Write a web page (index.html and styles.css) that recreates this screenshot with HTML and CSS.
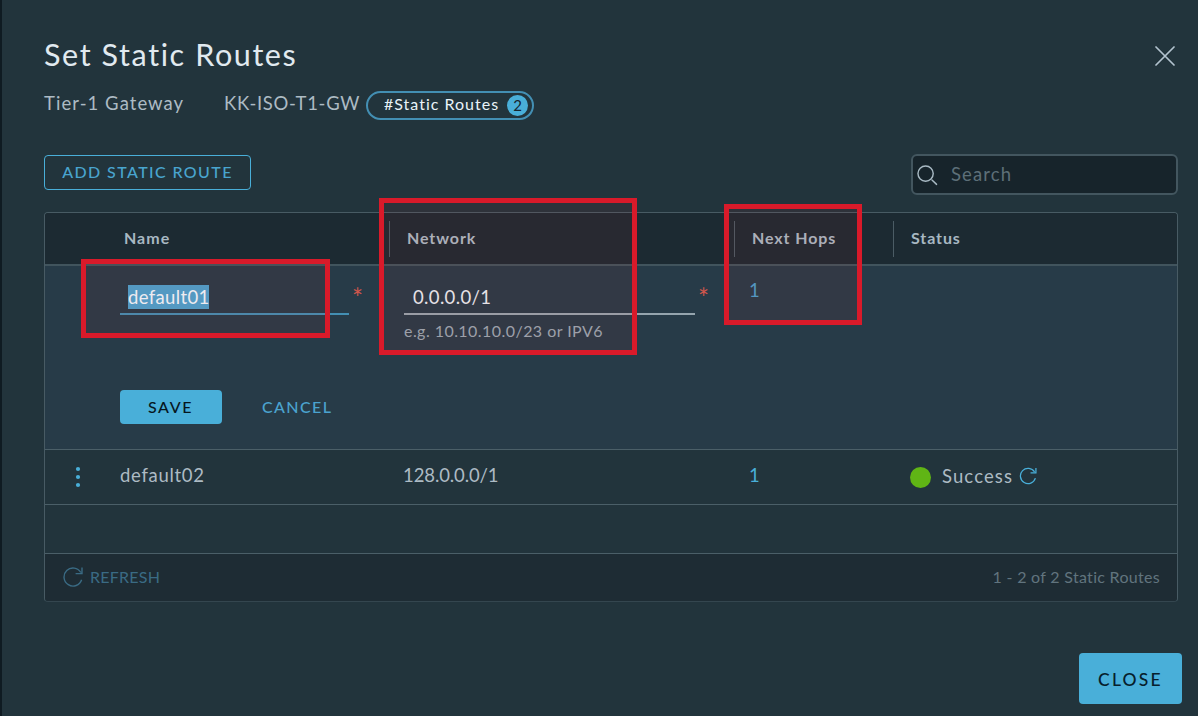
FILE: index.html
```html
<!DOCTYPE html>
<html lang="en">
<head>
<meta charset="utf-8">
<title>Set Static Routes</title>
<link rel="stylesheet" href="styles.css">
</head>
<body>
<main class="modal">
  <header class="modal-header">
    <h1 class="title"><span>Set Static Routes</span></h1>
    <svg class="close-icon" viewBox="0 0 20 20"><path d="M1 1L19 19M19 1L1 19"/></svg>
  </header>
  <div class="context">
    <span class="context-label"><span class="t-tier">Tier-1 Gateway</span></span>
    <span class="context-value"><span class="t-gw">KK-ISO-T1-GW</span></span>
    <span class="pill"><span class="t-pill">#Static Routes</span><span class="pill-count">2</span></span>
  </div>
  <div class="toolbar">
    <button class="btn-outline"><span class="t-add">ADD STATIC ROUTE</span></button>
    <div class="search">
      <svg class="search-icon" viewBox="0 0 22 22"><circle cx="9" cy="9" r="8"/><path d="M15.7 15.7L20.5 20.3"/></svg>
      <span class="t-search">Search</span>
    </div>
  </div>
  <section class="table">
    <div class="row head">
      <div class="cell head-name"><span class="t-name">Name</span></div>
      <div class="cell divided"><span class="t-network">Network</span></div>
      <div class="cell divided"><span class="t-hops">Next Hops</span></div>
      <div class="cell divided"><span class="t-status">Status</span></div>
    </div>
    <div class="edit">
      <div class="row edit-fields">
        <div class="field-cell name-cell">
          <div class="field field-name"><span class="selection">default01</span></div>
          <span class="required">*</span>
        </div>
        <div class="field-cell network-cell">
          <div class="field-stack">
            <div class="field field-network"><span class="t-net1">0.0.0.0/1</span></div>
            <div class="hint"><span class="t-hint">e.g. 10.10.10.0/23 or IPV6</span></div>
          </div>
          <span class="required">*</span>
        </div>
        <div class="hops-cell">1</div>
        <div></div>
      </div>
      <div class="actions">
        <button class="btn-save"><span class="t-save">SAVE</span></button>
        <button class="btn-cancel"><span class="t-cancel">CANCEL</span></button>
      </div>
    </div>
    <div class="row data">
      <div class="data-name">
        <svg class="kebab" viewBox="0 0 6 22"><circle cx="3" cy="3" r="2.1"/><circle cx="3" cy="11" r="2.1"/><circle cx="3" cy="19" r="2.1"/></svg>
        <span class="t-def2">default02</span>
      </div>
      <div class="data-network"><span class="t-net2">128.0.0.0/1</span></div>
      <div class="data-hops">1</div>
      <div class="data-status">
        <span class="dot"></span>
        <span class="t-success">Success</span>
        <svg class="reload" viewBox="0 0 20 20"><path d="M18.2 12.4A8.5 8.5 0 1 1 17.3 5.5M18.8 1.2V6.6H12.8"/></svg>
      </div>
    </div>
    <div class="empty"></div>
    <footer class="table-footer">
      <span class="refresh">
        <svg class="refresh-icon" viewBox="0 0 20 20"><path d="M18.6 12.8A9 9 0 1 1 17.8 5.5M19 .6V6.6H12.6"/></svg>
        <span class="t-refresh">REFRESH</span>
      </span>
      <span class="t-count">1 - 2 of 2 Static Routes</span>
    </footer>
  </section>
  <div class="modal-footer">
    <button class="btn-close"><span class="t-close">CLOSE</span></button>
  </div>
  <div class="mark mark-name"></div>
  <div class="mark mark-network"></div>
  <div class="mark mark-hops"></div>
</main>
</body>
</html>
```

FILE: styles.css
```css
* { box-sizing: border-box; }
body {
  margin: 0;
  background: #22343c;
  font-family: Lato, "Liberation Sans", sans-serif;
  font-size: 18.5px;
  color: #adbbc4;
}
span { white-space: nowrap; }
button { font-family: inherit; padding: 0; border: 0; cursor: pointer; font-weight: 500; }
svg { fill: none; flex: none; }
.modal {
  position: relative;
  width: 1198px;
  height: 716px;
  padding: 33px 16px 0 42px;
  border-left: 2px solid #0f1b22;
  background: #22343c;
  overflow: hidden;
}
.modal-header { display: flex; justify-content: space-between; height: 42px; padding-right: 7px; }
.title { margin: 0; font-size: 30.5px; line-height: 42px; font-weight: 400; color: #e1eaf0; letter-spacing: 1.6px; }
.close-icon { width: 20px; height: 20px; margin-top: 13px; stroke: #b3c3cf; stroke-width: 1.7; stroke-linecap: round; }

.context { display: flex; height: 29px; margin-top: 16px; line-height: 24px; }
.context-label { width: 180px; }
.context-value { width: 142px; }
.t-tier { letter-spacing: 1.05px; }
.t-gw { letter-spacing: 0.7px; }
.pill {
  display: flex; align-items: center; justify-content: space-between;
  width: 168px; height: 29px; padding: 0 5px 2px 17px;
  border: 2px solid #438fb3; border-radius: 15px;
  font-size: 16px; color: #e9f3f8;
}
.t-pill { margin: -1px 0 0 -1px; letter-spacing: 1px; }
.pill-count {
  width: 21px; height: 21px; margin: 1px -1px 0 0; border-radius: 50%;
  background: #49afd9; color: #16262f; line-height: 21px; text-align: center; font-size: 15px;
}

.toolbar { display: flex; justify-content: space-between; height: 41px; margin-top: 34px; padding-right: 4px; }
.btn-outline {
  width: 207px; height: 35px; margin-top: 1px; padding: 0 0 2px;
  border: 1.5px solid #49afd9; border-radius: 4px; background: transparent;
  color: #49a5cf; font-size: 16px; line-height: 31px;
}
.t-add { letter-spacing: 1.4px; }
.search {
  display: flex; align-items: flex-start; width: 267px; height: 41px; padding: 0 5px;
  border: 2px solid #43565f; border-radius: 6px; background: #17242b;
  color: #5d6f78; line-height: 37px;
}
.search-icon { width: 21px; height: 21px; margin: 9px 13px 0 -1px; stroke: #a9bac4; stroke-width: 1.5; stroke-linecap: round; }
.t-search { letter-spacing: 1.1px; }

.table {
  width: 1134px; height: 390px; margin-top: 17px;
  border: 1px solid #485b64; border-bottom-color: #34464f; border-radius: 4px; overflow: hidden;
}
.row { display: grid; grid-template-columns: 344px 345px 159px 1fr; }
.head {
  height: 53px; background: #1c2a32; border-bottom: 2px solid #41545d;
  font-size: 16px; font-weight: 700; line-height: 33px; color: #a8b8c2;
}
.cell { height: 36px; margin-top: 8px; }
.divided { border-left: 1px solid #4b5c65; padding-left: 17px; }
.head-name { padding-left: 79px; }
.t-name { letter-spacing: 1px; }
.t-network, .t-hops, .t-status { letter-spacing: 0.9px; }

.edit { height: 183px; background: #273b48; }
.edit-fields { height: 124px; }
.field-cell { display: flex; }
.name-cell { padding-left: 75px; }
.network-cell { padding-left: 15px; }
.field { height: 49px; padding-top: 19px; line-height: 24px; }
.field-name { width: 229px; padding-left: 8px; border-bottom: 2px solid #438fb3; }
.field-network { width: 291px; padding-left: 9px; border-bottom: 2px solid #95a5ae; color: #e6edf2; }
.t-net1 { letter-spacing: 0.35px; }
.selection { display: inline-block; width: 81px; height: 24px; background: #4ba1cd; color: #eef8fd; letter-spacing: 0.35px; }
.required { margin: 20px 0 0 3px; color: #d0564c; font-size: 26px; line-height: 24px; }
.hint { margin-top: 6px; font-size: 16px; line-height: 20px; color: #98a8b2; }
.t-hint { letter-spacing: 0.45px; }
.hops-cell { padding: 12px 0 0 15px; line-height: 24px; color: #4b9fcb; }
.actions { display: flex; gap: 40px; padding-left: 75px; }
.btn-save { width: 102px; height: 34px; padding-bottom: 2px; border-radius: 4px; background: #49afd9; color: #06161e; font-size: 16px; }
.btn-cancel { height: 34px; padding-bottom: 2px; background: transparent; color: #4ba3cf; font-size: 16px; }

.data { height: 55px; border-top: 1px solid #4b5f68; line-height: 50px; }
.data-name { display: flex; padding-left: 30px; }
.kebab { width: 6px; height: 22px; margin: 16px 39px 0 0; fill: #49afd9; }
.t-def2 { letter-spacing: 0.7px; }
.data-network { padding-left: 14px; }
.t-net2 { letter-spacing: -0.1px; }
.data-hops { padding-left: 15px; color: #49afd9; }
.data-status { display: flex; padding-left: 17px; line-height: 52px; }
.dot { width: 21px; height: 21px; margin: 17px 11px 0 0; border-radius: 50%; background: #60b515; }
.t-success { letter-spacing: 1.1px; }
.reload { width: 18px; height: 18px; margin: 17px 0 0 6px; stroke: #49afd9; stroke-width: 1.4; }
.empty { height: 49px; border-top: 1px solid #4b5f68; }
.table-footer {
  display: flex; justify-content: space-between; height: 48px; padding: 0 17px 0 18px;
  border-top: 1px solid #4b5f68; background: #1e2c34; font-size: 16px; line-height: 45px; color: #61747e;
}
.refresh { display: flex; color: #3a6b84; }
.refresh-icon { width: 20px; height: 20px; margin: 13px 7px 0 0; stroke: #3a6b84; stroke-width: 1.4; }
.t-refresh { letter-spacing: 0.25px; }
.t-count { letter-spacing: 0.3px; }

.modal-footer { display: flex; justify-content: flex-end; margin-top: 51px; }
.btn-close { width: 103px; height: 51px; padding-top: 1px; border-radius: 4px; background: #49afd9; color: #07202c; font-size: 17.5px; line-height: 51px; }
.t-close { letter-spacing: 2.2px; }
.t-save { margin-left: -1px; letter-spacing: 1.6px; }
.t-cancel { letter-spacing: 1.4px; }

/* Highlight frames laid over the table */
.mark { position: absolute; border: 5px solid #d91a2a; background: rgba(237, 28, 36, 0.06); }
.mark-name { left: 79px; top: 259px; width: 249px; height: 79px; }
.mark-network { left: 377px; top: 198px; width: 258px; height: 157px; }
.mark-hops { left: 722px; top: 204px; width: 138px; height: 121px; }
```
